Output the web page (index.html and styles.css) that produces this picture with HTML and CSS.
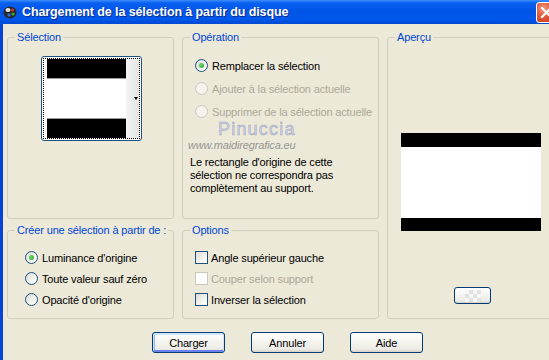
FILE: index.html
```html
<!DOCTYPE html>
<html>
<head>
  <meta charset="UTF-8">
  <title>Chargement de la sélection à partir du disque</title>
  <link rel="stylesheet" href="styles.css">
</head>
<body>

<div class="window">
  <div class="titlebar">
    <svg class="app-icon" width="14" height="14" viewBox="0 0 14 14">
      <ellipse cx="7" cy="7.5" rx="6.5" ry="6" fill="#2a2a2a"/>
      <ellipse cx="5" cy="5" rx="2.5" ry="2" fill="#e8e8e8"/>
      <circle cx="9.5" cy="5" r="1.6" fill="#d83030"/>
      <circle cx="10" cy="9" r="1.6" fill="#2fb040"/>
      <circle cx="6" cy="10" r="1.6" fill="#3a6ee0"/>
    </svg>
    <span class="title">Chargement de la sélection à partir du disque</span>
    <div class="close">
      <svg width="21" height="21" viewBox="0 0 21 21">
        <path d="M6 6 L15 15 M15 6 L6 15" stroke="#fff" stroke-width="2.2" stroke-linecap="square"/>
      </svg>
    </div>
  </div>

  <div class="client">
    <div class="groups">

      <fieldset class="group">
        <legend>Sélection</legend>
        <div class="thumb">
          <div class="thumb-inner">
            <div class="thumb-img">
              <div class="band"></div>
              <div class="blank"></div>
              <div class="band"></div>
            </div>
            <div class="thumb-strip"><span class="arrow"></span></div>
          </div>
        </div>
      </fieldset>

      <fieldset class="group">
        <legend>Opération</legend>
        <div class="op-list">
          <div class="opt op-row"><span class="radio checked"></span>Remplacer la sélection</div>
          <div class="opt op-row disabled"><span class="radio"></span>Ajouter à la sélection actuelle</div>
          <div class="opt op-row disabled"><span class="radio"></span>Supprimer de la sélection actuelle</div>
        </div>
        <div class="wm-name">Pinuccia</div>
        <div class="wm-url">www.maidiregrafica.eu</div>
        <p class="note">Le rectangle d'origine de cette<br>sélection ne correspondra pas<br>complètement au support.</p>
      </fieldset>

      <fieldset class="group preview-group">
        <legend>Aperçu</legend>
        <div class="preview">
          <div class="band top"></div>
          <div class="blank"></div>
          <div class="band bottom"></div>
        </div>
        <div class="chk-btn"><span class="checker"></span></div>
      </fieldset>

      <fieldset class="group">
        <legend>Créer une sélection à partir de :</legend>
        <div class="create-list">
          <div class="opt row21"><span class="radio checked"></span>Luminance d'origine</div>
          <div class="opt row21"><span class="radio"></span>Toute valeur sauf zéro</div>
          <div class="opt row21"><span class="radio"></span>Opacité d'origine</div>
        </div>
      </fieldset>

      <fieldset class="group">
        <legend>Options</legend>
        <div class="options-list">
          <div class="opt row21"><span class="check"></span>Angle supérieur gauche</div>
          <div class="opt row21 disabled"><span class="check"></span>Couper selon support</div>
          <div class="opt row21"><span class="check"></span>Inverser la sélection</div>
        </div>
      </fieldset>

    </div>

    <div class="buttons">
      <button class="btn default">Charger</button>
      <button class="btn">Annuler</button>
      <button class="btn">Aide</button>
    </div>
  </div>
</div>

</body>
</html>
```

FILE: styles.css
```css
body {
  margin: 0;
  width: 549px;
  height: 360px;
  overflow: hidden;
  background-color: #ece9d8;
  font-family: "Liberation Sans", Arial, sans-serif;
  font-size: 11px;
  letter-spacing: -0.15px;
  color: #000;
}
.window {
  height: 360px;
  display: flex;
  flex-direction: column;
  overflow: hidden;
}
.titlebar {
  height: 24px;
  flex: none;
  display: flex;
  align-items: center;
  overflow: hidden;
  background: linear-gradient(to bottom, #3d8ffb 0%, #0a60f0 12%, #0055e6 45%, #0058ec 80%, #0048d2 100%);
}
.app-icon {
  margin-left: 3px;
  margin-right: 5px;
  flex: none;
}
.title {
  color: #fff;
  font-weight: bold;
  font-size: 12.5px;
  letter-spacing: -0.1px;
  text-shadow: 1px 1px 0 #0a2a8c;
  white-space: nowrap;
}
.close {
  margin-left: auto;
  margin-right: -8px;
  flex: none;
  width: 21px;
  height: 21px;
  box-sizing: border-box;
  border: 1px solid #fff;
  border-radius: 3px;
  background: radial-gradient(circle at 35% 30%, #f09a80 0%, #e0583a 45%, #c53a18 100%);
}
.close svg {
  display: block;
  margin: -1px;
}
.client {
  flex: 1;
  border-left: 3px solid #0842d8;
  padding: 7px 0 0 4px;
}
.groups {
  display: grid;
  grid-template-columns: 167px 197px 190px;
  grid-template-rows: 188px 95px;
  gap: 5px 8px;
}
.group {
  margin: 0;
  padding: 0;
  min-width: 0;
  border: 1px solid #d0d0bf;
  border-radius: 3px;
}
.group legend {
  margin-left: 7px;
  padding: 0 2px;
  line-height: 13px;
  color: #0046d5;
  white-space: nowrap;
}
.preview-group {
  grid-column: 3;
  grid-row: 1 / 3;
}

/* selection thumbnail */
.thumb {
  margin: 12px 0 0 33px;
  width: 101px;
  height: 85px;
  box-sizing: border-box;
  border: 1px solid #1c5180;
  border-radius: 3px;
  background: #fff;
  padding: 1px;
}
.thumb-inner {
  height: 100%;
  box-sizing: border-box;
  border: 1px dotted #000;
  display: flex;
  padding-left: 3px;
}
.thumb-img {
  width: 79px;
  display: flex;
  flex-direction: column;
}
.thumb-img .band {
  height: 19px;
  background: #000;
}
.thumb-img .band:first-child {
  border-bottom: 1px solid #9a9a9a;
}
.thumb-img .blank {
  flex: 1;
  background: #fff;
  border-bottom: 1px solid #9a9a9a;
}
.thumb-strip {
  flex: 1;
  display: flex;
  align-items: center;
  justify-content: flex-end;
  padding-right: 1px;
  background: linear-gradient(to right, #f4f4f4, #e4e4e4);
}
.arrow {
  width: 0;
  height: 0;
  border-left: 2.5px solid transparent;
  border-right: 2.5px solid transparent;
  border-top: 3px solid #000;
}

/* radios and checkboxes */
.opt {
  display: flex;
  align-items: center;
  white-space: nowrap;
}
.opt.disabled {
  color: #aca899;
}
.op-list {
  margin-top: 10px;
  padding-left: 12px;
}
.op-row {
  height: 23px;
}
.row21 {
  height: 21px;
}
.create-list {
  margin-top: 10px;
  padding-left: 17px;
}
.options-list {
  margin-top: 10px;
  padding-left: 12px;
}
.radio {
  width: 13px;
  height: 13px;
  box-sizing: border-box;
  border: 1px solid #1c5180;
  border-radius: 50%;
  margin-right: 4px;
  flex: none;
  background: linear-gradient(135deg, #dcdbd5 0%, #f4f4f0 60%, #fff 100%);
  display: flex;
  align-items: center;
  justify-content: center;
}
.radio.checked::after {
  content: "";
  width: 5px;
  height: 5px;
  border-radius: 50%;
  background: radial-gradient(circle at 40% 40%, #6cd86c, #21a121);
}
.disabled .radio {
  border-color: #cac8bb;
  background: #f4f3ec;
}
.check {
  width: 13px;
  height: 13px;
  box-sizing: border-box;
  border: 1px solid #1c5180;
  margin-right: 3px;
  flex: none;
  background: linear-gradient(135deg, #dcdbd5 0%, #f4f4f0 60%, #fff 100%);
}
.disabled .check {
  border-color: #cac8bb;
  background: #fff;
}

/* watermark and note */
.wm-name {
  margin: -2px 0 0 35px;
  font-size: 18px;
  line-height: 16px;
  letter-spacing: 1.2px;
  color: #d2d6e8;
  -webkit-text-stroke: 0.5px #9aa0bc;
}
.wm-url {
  margin: 2px 0 0 5px;
  line-height: 13px;
  font-style: italic;
  color: #969696;
}
.note {
  margin: 4px 0 0 7px;
  line-height: 13px;
}

/* preview */
.preview {
  margin: 89px 0 0 13px;
  width: 140px;
  height: 98px;
  display: flex;
  flex-direction: column;
  background: #fff;
}
.preview .top {
  height: 14px;
  background: #000;
}
.preview .blank {
  flex: 1;
}
.preview .bottom {
  height: 13px;
  background: #000;
}
.chk-btn {
  margin: 56px 0 0 66px;
  width: 37px;
  height: 17px;
  box-sizing: border-box;
  border: 1px solid #003c74;
  border-radius: 3px;
  background: linear-gradient(to bottom, #fff, #ecebe6 85%, #d6d0c5);
  display: flex;
  align-items: center;
  justify-content: center;
}
.checker {
  width: 16px;
  height: 12px;
  background-color: #f6f6f6;
  background-image:
    linear-gradient(45deg, #e2e2e2 25%, transparent 25%, transparent 75%, #e2e2e2 75%),
    linear-gradient(45deg, #e2e2e2 25%, transparent 25%, transparent 75%, #e2e2e2 75%);
  background-size: 8px 8px;
  background-position: 0 0, 4px 4px;
}

/* buttons */
.buttons {
  display: flex;
  gap: 26px;
  margin: 13px 0 0 145px;
}
.btn {
  width: 73px;
  height: 21px;
  padding: 0;
  border: 1px solid #003c74;
  border-radius: 3px;
  background: linear-gradient(to bottom, #fff 0%, #f4f3ee 50%, #ecebe6 85%, #d6d0c5 100%);
  font-family: "Liberation Sans", Arial, sans-serif;
  font-size: 11px;
  letter-spacing: -0.15px;
  color: #000;
}
.btn.default {
  box-shadow: inset 0 1px 0 1px #cee7ff, inset 0 -1px 0 1px #6982ee, inset 1px 0 0 1px #98b8ea;
}
```
